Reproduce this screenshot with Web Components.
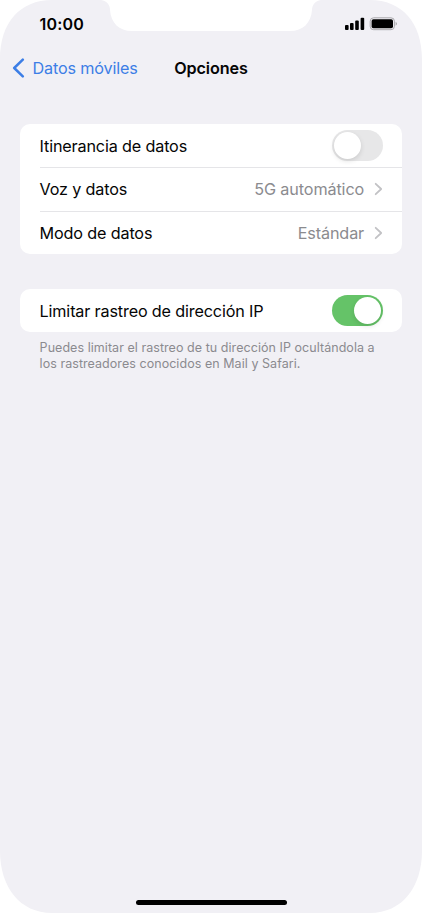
<!DOCTYPE html>
<html lang="es">
<head>
<meta charset="utf-8">
<title>Opciones</title>
<style>
html,body{margin:0;padding:0;background:#fff}
body{width:422px;height:913px;overflow:hidden;font-family:Inter,"Liberation Sans",sans-serif;color:#050505}
</style>
</head>
<body>
<phone-screen>
  <status-bar slot="status" time="10:00"></status-bar>
  <nav-bar slot="nav"><span slot="back">Datos móviles</span><span slot="title">Opciones</span></nav-bar>
  <settings-group>
    <settings-row>Itinerancia de datos<toggle-switch slot="end"></toggle-switch></settings-row>
    <settings-row divided>Voz y datos<row-value slot="end">5G automático</row-value></settings-row>
    <settings-row divided>Modo de datos<row-value slot="end">Estándar</row-value></settings-row>
  </settings-group>
  <settings-group>
    <settings-row>Limitar rastreo de dirección IP<toggle-switch slot="end" on></toggle-switch></settings-row>
    <note-text slot="note">Puedes limitar el rastreo de tu dirección IP ocultándola a<br>los rastreadores conocidos en Mail y Safari.</note-text>
  </settings-group>
</phone-screen>
<script>
function define(name, html) {
  const template = document.createElement('template');
  template.innerHTML = html;
  customElements.define(name, class extends HTMLElement {
    constructor() {
      super();
      this.attachShadow({mode: 'open'}).append(template.content.cloneNode(true));
    }
    connectedCallback() {
      const time = this.shadowRoot.querySelector('time');
      if (time) time.textContent = this.getAttribute('time');
    }
  });
}

define('phone-screen', `
<style>
:host{display:flex;flex-direction:column;position:relative;width:422px;height:913px;overflow:hidden;background:#f1f0f5}
.frame{position:absolute;inset:0;pointer-events:none}
main{flex:1;display:flex;flex-direction:column;gap:35px;padding:36px 19.6px 0}
.home{width:151px;height:5px;border-radius:3px;background:#000;margin:0 auto 8px}
</style>
<svg class="frame" width="422" height="913" viewBox="0 0 422 913" fill="#fff">
<path d="M0 0H52C20 0 0 23 0 59Z"/><path d="M422 0H370C402 0 422 23 422 59Z"/>
<path d="M0 913H52C20 913 0 887 0 851Z"/><path d="M422 913H370C402 913 422 887 422 851Z"/>
<path d="M101 0C107 1 110 5 110 10C111 23 119 31 132 31H290C303 31 311 23 312 10C312 5 315 1 321 0Z"/>
</svg>
<slot name="status"></slot><slot name="nav"></slot><main><slot></slot></main><div class="home"></div>`);

define('status-bar', `
<style>
:host{display:flex;align-items:center;justify-content:space-between;height:48px;padding:0 25px 0 39.6px;box-sizing:border-box}
time{font-size:16px;font-weight:600;line-height:20px;letter-spacing:0.2px;color:#000}
</style>
<time></time>
<svg width="53" height="16" viewBox="0 0 53 16">
<g fill="#000"><rect x="1" y="9" width="3.6" height="5" rx="1"/><rect x="6" y="7" width="3.6" height="7" rx="1"/><rect x="11.2" y="4.5" width="3.6" height="9.5" rx="1"/><rect x="16.6" y="1.7" width="3.6" height="12.3" rx="1"/></g>
<rect x="26.2" y="1.8" width="24.2" height="11.9" rx="3.4" fill="none" stroke="#aaa9ad"/>
<rect x="27.6" y="3.2" width="21.4" height="9.1" rx="1.8" fill="#000"/>
<path d="M51.6 5.8Q53 6.6 53 7.8Q53 9 51.6 9.8Z" fill="#aaa9ad"/>
</svg>`);

define('nav-bar', `
<style>
:host{display:grid;grid-template-columns:1fr auto 1fr;align-items:center;height:40px;padding:0 12px;line-height:24px}
.back{display:flex;align-items:center;gap:7.5px;color:#3c7ee6;font-size:16.2px;letter-spacing:-.15px;white-space:nowrap}
.title{font-size:16.2px;font-weight:600;letter-spacing:-0.12px;color:#050505}
</style>
<div class="back"><svg width="13" height="20" viewBox="0 0 13 20"><path d="M10.8 1.7L2.2 10L10.8 18.3" fill="none" stroke="#3c7ee6" stroke-width="2.5" stroke-linecap="round" stroke-linejoin="round"/></svg><slot name="back"></slot></div>
<div class="title"><slot name="title"></slot></div>`);

define('settings-group', `
<style>
:host{display:block}
.card{background:#fff;border-radius:10px;overflow:hidden}
</style>
<div class="card"><slot></slot></div><slot name="note"></slot>`);

define('note-text', `
<style>
:host{display:block;padding:8px 20px 0;font-size:12.5px;line-height:16px;letter-spacing:.05px;color:#8b8a8f;white-space:nowrap}
</style><slot></slot>`);

define('settings-row', `
<style>
:host{display:block;padding-left:20px}
.row{height:43.33px;display:flex;align-items:center;justify-content:space-between;padding-right:19.8px;font-size:16.2px;letter-spacing:-.16px;box-sizing:border-box;line-height:24px;white-space:nowrap}
:host([divided]) .row{background:linear-gradient(#e5e5e8,#e5e5e8) top/100% 1px no-repeat;padding-top:1px}
</style>
<div class="row"><span><slot></slot></span><slot name="end"></slot></div>`);

define('row-value', `
<style>
:host{display:flex;align-items:center;gap:9.5px;color:#8b8b8f;letter-spacing:-.12px}
</style>
<span><slot></slot></span><svg width="9" height="14" viewBox="0 0 9 14"><path d="M1.7 1.8L7.2 7L1.7 12.2" fill="none" stroke="#c2c2c5" stroke-width="1.8" stroke-linecap="round" stroke-linejoin="round"/></svg>`);

define('toggle-switch', `
<style>
:host{display:flex;width:51px;height:31px;padding:2px;box-sizing:border-box;border-radius:16px;background:#e7e7e8}
:host([on]){background:#65c368;justify-content:flex-end}
i{width:27px;height:27px;border-radius:50%;background:#fff;box-shadow:0 2px 5px rgba(0,0,0,.12)}
</style><i></i>`);
</script>
</body>
</html>
